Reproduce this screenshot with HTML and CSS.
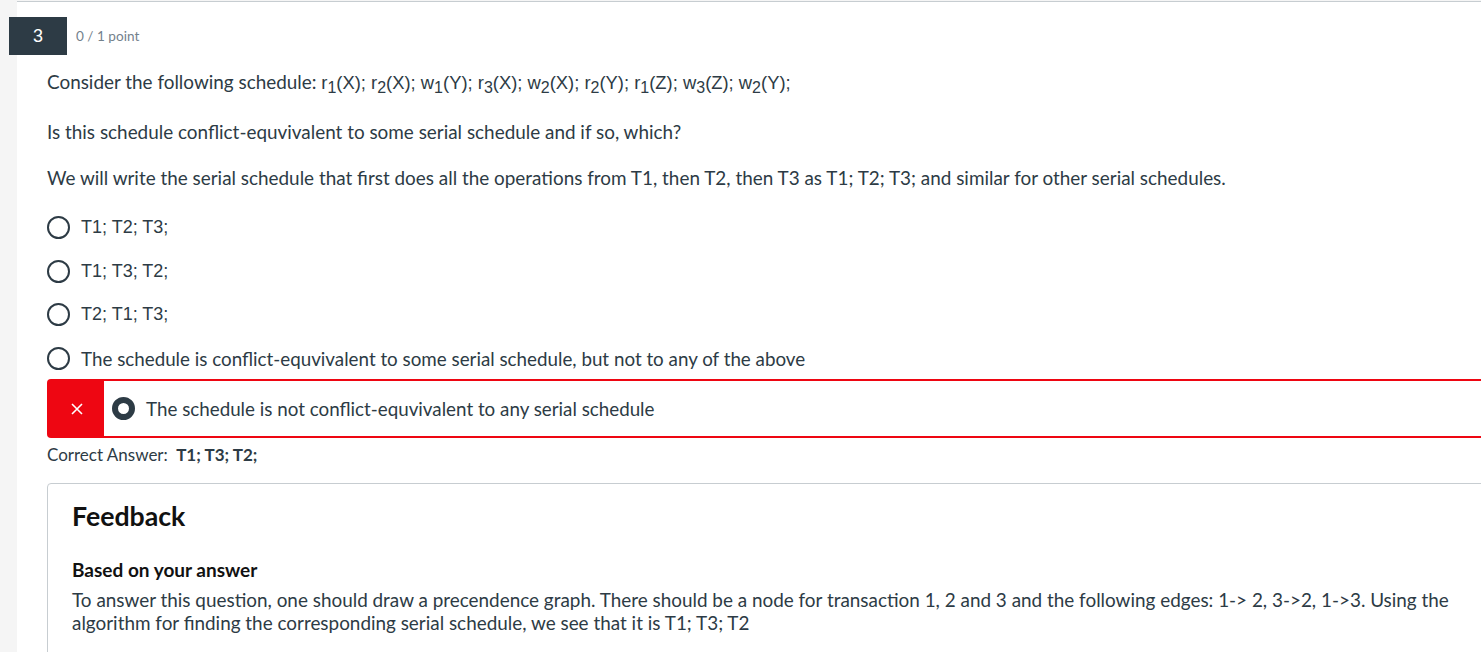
FILE: index.html
```html
<!DOCTYPE html>
<html>
<head>
<meta charset="utf-8">
<link rel="stylesheet" href="styles.css">
</head>
<body>
<div class="page">
  <div class="card">
    <div class="q-header">
      <div class="q-badge">3</div>
      <div class="q-points">0 / 1 point</div>
    </div>
    <div class="q-body">
      <p class="q-text q-first">Consider the following schedule: <span class="sched">r<sub>1</sub>(X); r<sub>2</sub>(X); w<sub>1</sub>(Y); r<sub>3</sub>(X); w<sub>2</sub>(X); r<sub>2</sub>(Y); r<sub>1</sub>(Z); w<sub>3</sub>(Z); w<sub>2</sub>(Y);</span></p>
      <p class="q-text q-second">Is this schedule conflict-equvivalent to some serial schedule and if so, which?</p>
      <p class="q-text">We will write the serial schedule that first does all the operations from T1, then T2, then T3 as T1; T2; T3; and similar for other serial schedules.</p>

      <div class="options">
        <div class="option"><span class="radio"></span><span class="opt-label arial">T1; T2; T3;</span></div>
        <div class="option"><span class="radio"></span><span class="opt-label arial">T1; T3; T2;</span></div>
        <div class="option"><span class="radio"></span><span class="opt-label arial">T2; T1; T3;</span></div>
        <div class="option"><span class="radio"></span><span class="opt-label">The schedule is conflict-equvivalent to some serial schedule, but not to any of the above</span></div>
        <div class="option-wrong">
          <div class="wrong-flag">
            <svg width="14" height="14" viewBox="0 0 14 14"><path d="M2 2 L12 12 M12 2 L2 12" stroke="#fff" stroke-width="1.6" fill="none"/></svg>
          </div>
          <span class="radio radio-checked"></span>
          <span class="opt-label">The schedule is not conflict-equvivalent to any serial schedule</span>
        </div>
      </div>

      <div class="correct">Correct Answer: <strong>T1; T3; T2;</strong></div>

      <div class="feedback">
        <h2 class="fb-title">Feedback</h2>
        <h3 class="fb-sub">Based on your answer</h3>
        <p class="fb-text">To answer this question, one should draw a precendence graph. There should be a node for transaction 1, 2 and 3 and the following edges: 1-&gt; 2, 3-&gt;2, 1-&gt;3. Using the algorithm for finding the corresponding serial schedule, we see that it is T1; T3; T2</p>
      </div>
    </div>
  </div>
</div>
</body>
</html>
```

FILE: styles.css
```css
html, body {
  margin: 0;
  padding: 0;
  overflow: hidden;
  height: 652px;
}
body {
  background: #f5f5f5;
  font-family: "Lato", "Liberation Sans", sans-serif;
  color: #2d3b45;
}
.page {
  padding-top: 1px;
  padding-left: 17px;
}
.card {
  background: #fff;
  border-top: 1px solid #c7cdd1;
  margin-right: -40px;
  height: 700px;
}
.q-header {
  display: flex;
  align-items: center;
  padding-top: 15px;
}
.q-badge {
  margin-left: -8px;
  width: 58px;
  height: 38px;
  background: #2d3b45;
  color: #fff;
  font-family: "Liberation Sans", Arial, sans-serif;
  font-size: 18px;
  display: flex;
  align-items: center;
  justify-content: center;
}
.q-points {
  margin-left: 9px;
  font-size: 13.6px;
  color: #73818c;
}
.q-body {
  padding-left: 30px;
}
.q-text {
  margin: 21px 0 0;
  font-size: 18.9px;
  line-height: 25px;
}
.q-first {
  margin-top: 15px;
  line-height: 24px;
}
.q-second {
  margin-top: 24px;
}
.sched {
  font-family: "Liberation Sans", Arial, sans-serif;
  font-size: 18.4px;
}
.sched sub {
  font-size: 16px;
  line-height: 0;
  vertical-align: -4px;
}
.arial {
  font-family: "Liberation Sans", Arial, sans-serif;
  font-size: 18px;
}
.options {
  margin-top: 15.5px;
}
.option {
  display: flex;
  align-items: center;
  height: 43.7px;
  font-size: 18.8px;
}
.radio {
  box-sizing: border-box;
  width: 23px;
  height: 23px;
  border: 2px solid #2d3b45;
  border-radius: 50%;
  flex: none;
}
.radio-checked {
  border-width: 6px;
}
.opt-label {
  margin-left: 11px;
}
.option-wrong {
  display: flex;
  align-items: center;
  height: 55px;
  margin-top: -1px;
  border: 2px solid #ee0612;
  border-right: none;
  border-radius: 4px 0 0 4px;
  font-size: 18.8px;
}
.option-wrong .radio {
  margin-left: 8px;
}
.wrong-flag {
  width: 55px;
  height: 100%;
  background: #ee0612;
  display: flex;
  align-items: center;
  justify-content: center;
}
.correct {
  margin-top: 5px;
  font-size: 17px;
  line-height: 24px;
}
.correct strong {
  margin-left: 4px;
}
.feedback {
  margin-top: 16px;
  border: 1px solid #c7cdd1;
  border-radius: 4px;
  padding: 16px 24px 24px;
}
.fb-title {
  margin: 0;
  font-size: 26.7px;
  line-height: 32px;
  font-weight: 700;
  color: #111;
}
.fb-sub {
  margin: 26px 0 0;
  font-size: 19px;
  line-height: 24px;
  font-weight: 700;
  color: #111;
}
.fb-text {
  margin: 6px 0 0;
  font-size: 18.9px;
  line-height: 23px;
  max-width: 1395px;
}
```
